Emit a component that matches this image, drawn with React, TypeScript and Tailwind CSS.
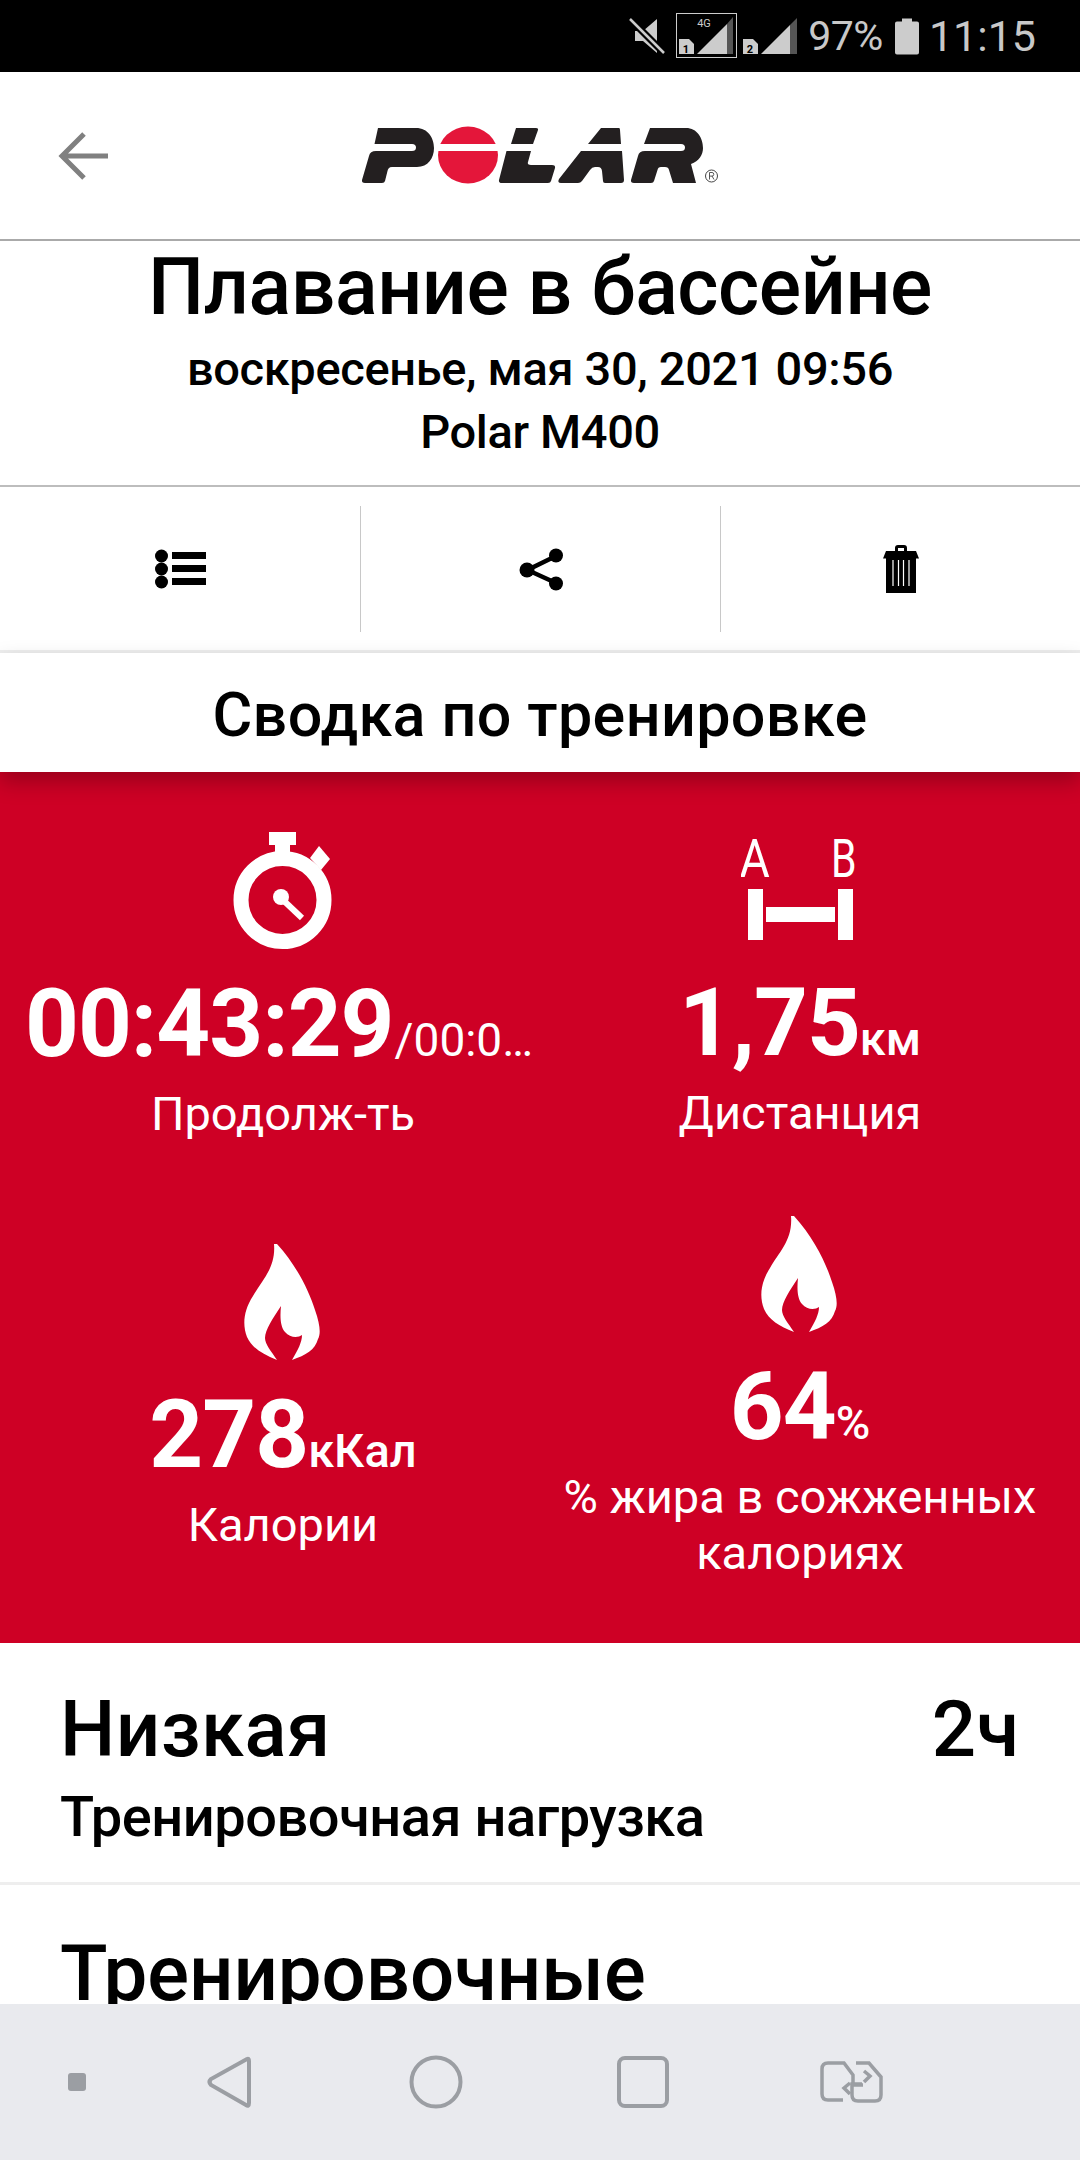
import React from "react";

function StatusIcons() {
  return (
    <svg width="170" height="72" viewBox="630 0 170 72" className="shrink-0">
      <g fill="#cccccc" stroke="none">
        <path d="M637 31h8l14-12v34l-14-12h-8z" />
        <path d="M632 19l34 34" stroke="#000" strokeWidth="7" fill="none" />
        <path d="M632 19l34 34" stroke="#cccccc" strokeWidth="2.500" fill="none" />
      </g>
      <rect x="678.500" y="13.500" width="60" height="44" fill="none" stroke="#cccccc" strokeWidth="1" />
      <text x="706" y="27" fontSize="11" fill="#cccccc" textAnchor="middle" fontFamily="Roboto, sans-serif">4G</text>
      <path d="M699 54l30-30v30z" fill="#cccccc" />
      <path d="M729 24l6-7v37h-6z" fill="#555" />
      <path d="M681 39h10l5 5v10h-15z" fill="#cccccc" />
      <text x="688" y="53" fontSize="11" fontWeight="700" fill="#000" textAnchor="middle" fontFamily="Roboto, sans-serif">1</text>
      <path d="M745 39h10l5 5v10h-15z" fill="#cccccc" />
      <text x="752" y="53" fontSize="11" fontWeight="700" fill="#000" textAnchor="middle" fontFamily="Roboto, sans-serif">2</text>
      <path d="M763 54l29-29v29z" fill="#cccccc" />
      <path d="M792 25l7-7v36h-7z" fill="#555" />
    </svg>
  );
}

function Logo() {
  return (
    <svg width="362" height="62" viewBox="360 125 362 62">
      <g fill="#231f20">
        <path d="M378,128 H416 C428,128 434,138 434,148 C434,158 428,167 417,167 H392 C389,167 388,169 387.5,171 L385,181 Q384.5,183 382,183 H365 Q361.5,183 362,180 L369,156 Q370,151 376,151 H412 Q416,151 416,147.5 Q416,144 412,144 H374.5 Z" />
        <path d="M516,128 H536 Q538.5,128 538,130 L533,144 H511 Z" />
        <path d="M506.5,151 H531 L528,162 Q527,165 531,165 H552 Q555.5,165 555,168 L551,181 Q550.5,183 548,183 H502 Q498.5,183 499,180 Z" />
        <path d="M601,128 H619 Q620,128 620,130 L621,144 H588 Z" />
        <path d="M581,151 H622 L624,180 Q624,183 621,183 H605 Q603,183 603,181 L602,171 Q601.5,167 598,167 H595 Q592,167 590,170 L582,181 Q580.5,183 578,183 H561 Q557,183 559,179 Z" />
        <path d="M650,128 H686 C697,128 703,138 703,148 C703,155 699,161 691,164 L696,183 H673 L669,170 Q668.5,167 665,167 H661 Q658,167 657.5,170 L654,181 Q653.5,183 651,183 H634 Q630.5,183 631,180 L638,156 Q639,151 645,151 H681 Q685,151 685,147.5 Q685,144 681,144 H644 Z" />
      </g>
      <ellipse cx="468" cy="155" rx="30" ry="28.5" fill="#e4163a" />
      <rect x="436" y="144" width="64" height="7" fill="#fff" />
      <circle cx="711.5" cy="176" r="6" fill="none" stroke="#444" strokeWidth="1" />
      <path d="M709.5 179.5v-7h2.500a1.800 1.800 0 0 1 0 3.600h-2.500M712 176l2 3.500" fill="none" stroke="#444" strokeWidth="0.9" />
    </svg>
  );
}

function ListIcon() {
  return (
    <svg width="52" height="40" viewBox="156 549 52 40" className="ml-[2px]">
      <circle cx="162.500" cy="556" r="6.500" />
      <circle cx="162.500" cy="569" r="6.500" />
      <circle cx="162.500" cy="582" r="6.500" />
      <rect x="173" y="552" width="34" height="7" />
      <rect x="173" y="565" width="34" height="7" />
      <rect x="173" y="578" width="34" height="7" />
    </svg>
  );
}

function ShareIcon() {
  return (
    <svg width="44" height="44" viewBox="518 546 44 44">
      <path d="M555 555L526.500 569L555 582" fill="none" stroke="#000" strokeWidth="4.500" />
      <circle cx="555" cy="554.500" r="7" />
      <circle cx="526" cy="569" r="7.500" />
      <circle cx="555" cy="582.500" r="7" />
    </svg>
  );
}

function TrashIcon() {
  return (
    <svg width="38" height="48" viewBox="881 543 38 48">
      <path d="M894 549v-3q0-3 3-3h6q3 0 3 3v3h9l3 7.500h-36l3-7.500zM897 549h6v-3h-6z" fillRule="evenodd" />
      <rect x="885" y="555" width="30" height="36" />
      <g stroke="#fff" strokeWidth="1.200">
        <path d="M892 558v26M897.500 558v26M902.500 558v26M908 558v26" />
      </g>
    </svg>
  );
}

function Stopwatch() {
  return (
    <svg width="104" height="117" viewBox="232 833 104 117">
      <g fill="#fff">
        <rect x="270" y="833" width="27" height="13" />
        <rect x="276" y="845" width="15" height="8" />
        <path d="M311 859l9-12 11 13-9 11z" />
      </g>
      <circle cx="283.500" cy="901" r="41.500" fill="none" stroke="#fff" strokeWidth="15" />
      <circle cx="282" cy="898" r="8" fill="#fff" />
      <path d="M284 901L303 919" stroke="#fff" strokeWidth="6" />
    </svg>
  );
}

function AB() {
  return (
    <svg width="118" height="104" viewBox="741 840 118 104">
      <text transform="translate(739.5 879) scale(0.86 1)" fontSize="54" fill="#fff" fontFamily="Roboto, sans-serif">A</text>
      <text transform="translate(831 879) scale(0.76 1)" fontSize="54" fill="#fff" fontFamily="Roboto, sans-serif">B</text>
      <rect x="748" y="891" width="15" height="51" fill="#fff" />
      <rect x="838" y="891" width="15" height="51" fill="#fff" />
      <rect x="766" y="909" width="69" height="15" fill="#fff" />
    </svg>
  );
}

function Flame() {
  return (
    <svg width="77" height="116" viewBox="0 0 77 116" className="mr-[2px]">
      <path
        fill="#fff"
        d="M30 0H33C53 22 65 47 71 66C76 80 77 90 74 95C71 106 62 111 48 116C54 106 58 98 58 91C54 94 46 94 41 88C36 82 36 72 37 62C29 74 21 86 21 94C21 100 27 107 33 116C18 110 8 104 3 93C-2 80 0 66 9 52C18 36 32 24 30 0Z"
      />
    </svg>
  );
}

function Metric({ icon, value, unit, label, extra, light }: { icon: React.ReactNode; value: string; unit: string; label: string; extra?: string; light?: boolean }) {
  return (
    <div className="flex flex-col items-center">
      <div className="h-[117px] flex items-center justify-center">{icon}</div>
      <div className="mt-[19px] h-[112px] flex items-baseline justify-center leading-[112px] whitespace-nowrap">
        <span className="text-[94px] font-bold text-white tracking-[-1px]">{value}</span>
        <span className={light ? "text-[46px] ml-[1px] mr-[8px] font-normal text-white" : "text-[47px] font-medium text-white"}>{unit}</span>
      </div>
      <div className="mt-[6px] text-[47px] leading-[56px] text-white text-center">{label}</div>
      {extra && <div className="text-[47px] leading-[56px] text-white text-center">{extra}</div>}
    </div>
  );
}

function NavIcons() {
  return (
    <svg width="1080" height="156" viewBox="0 2004 1080 156" fill="none" stroke="#9b9ea3" strokeWidth="4">
      <rect x="68" y="2073" width="18" height="18" rx="3" fill="#9b9ea3" stroke="none" />
      <path d="M247 2059q2-1 2 2v42q0 4-3 2l-35-20q-3-3 0-6z" />
      <circle cx="436" cy="2082" r="24.500" />
      <rect x="619" y="2058" width="48" height="48" rx="6" />
      <path d="M843 2100h-15q-6 0-6-6v-25q0-6 6-6h16l9 12v10h10M856 2063h13l12 14v18q0 6-6 6h-17q-6 0-6-6v-11h10" strokeWidth="3.500" />
      <path d="M864 2071l6 5-6 6M850 2083l-6 5 6 6" strokeWidth="3.500" />
    </svg>
  );
}

export default function App() {
  return (
    <div className="w-[1080px] h-[2160px] flex flex-col overflow-hidden bg-white text-black [font-family:Roboto,sans-serif]">
      <div className="h-[72px] bg-black flex items-center justify-end shrink-0 pr-[44px] text-[#c8c8c8]">
        <StatusIcons />
        <span className="text-[41px] leading-none ml-[10px] tracking-[-0.5px]">97%</span>
        <svg width="24" height="37" viewBox="0 0 24 36" className="ml-[12px]">
          <path d="M7 0h10v3h5q2 0 2 2v29q0 2-2 2h-20q-2 0-2-2v-29q0-2 2-2h5z" fill="#cccccc" />
        </svg>
        <span className="text-[43px] leading-none ml-[10px]">11:15</span>
      </div>

      <div className="flex-1 min-h-0 overflow-hidden flex flex-col">
        <div className="h-[169px] shrink-0 relative flex items-center justify-center border-b-[2px] border-[#aaaaaa]">
          <svg width="52" height="48" viewBox="58 132 52 48" className="absolute left-[58px] top-[60px]">
            <path d="M108 156H64M84 134L62 156L84 178" fill="none" stroke="#808080" strokeWidth="5" />
          </svg>
          <div className="ml-[2px]"><Logo /></div>
        </div>

        <div className="h-[246px] shrink-0 flex flex-col items-center border-b-[2px] border-[#bdbdbd]">
          <div className="text-[79px] font-medium tracking-[-0.45px] leading-[94px] mt-[-1px]">Плавание в бассейне</div>
          <div className="text-[47px] font-medium tracking-[-0.35px] leading-[60px] mt-[5px]">воскресенье, мая 30, 2021 09:56</div>
          <div className="text-[47px] font-medium tracking-[-0.35px] leading-[60px] mt-[3px]">Polar M400</div>
        </div>

        <div className="h-[166px] shrink-0 flex items-center border-b-[3px] border-[#eeeeee]">
          <div className="w-[361px] h-[126px] flex items-center justify-center border-r border-[#c8c8c8]"><ListIcon /></div>
          <div className="w-[360px] h-[126px] flex items-center justify-center border-r border-[#c8c8c8]"><ShareIcon /></div>
          <div className="flex-1 h-[126px] flex items-center justify-center"><TrashIcon /></div>
        </div>

        <div className="h-[119px] shrink-0 relative z-10 bg-white flex items-center justify-center text-[61px] font-medium tracking-[0.4px] shadow-[0_10px_20px_rgba(0,0,0,0.25)] pt-[7px]">
          Сводка по тренировке
        </div>

        <div className="h-[871px] shrink-0 bg-[#ce0025] pl-[6px] pt-[60px] grid grid-cols-[554px_480px] grid-rows-[309px_auto] gap-y-[74px] content-start">
          <Metric icon={<Stopwatch />} value="00:43:29" unit="/00:0…" label="Продолж-ть" light />
          <Metric icon={<AB />} value="1,75" unit="км" label="Дистанция" />
          <div className="self-center">
            <Metric icon={<Flame />} value="278" unit="кКал" label="Калории" />
          </div>
          <Metric icon={<Flame />} value="64" unit="%" label="% жира в сожженных" extra="калориях" />
        </div>

        <div className="h-[242px] shrink-0 pl-[60px] pr-[61px] border-b-[3px] border-[#eeeeee]">
          <div className="flex justify-between items-center h-[86px] mt-[44px]">
            <span className="text-[78px] font-medium tracking-[0.4px] leading-none">Низкая</span>
            <span className="text-[78px] font-medium leading-none">2ч</span>
          </div>
          <div className="text-[56px] font-medium tracking-[-0.5px] leading-[60px] mt-[14px]">Тренировочная нагрузка</div>
        </div>

        <div className="pl-[60px] pt-[44px] text-[78px] font-medium tracking-[-0.1px] leading-[90px]">Тренировочные</div>
      </div>

      <div className="h-[156px] shrink-0 bg-[#e9eaee]">
        <NavIcons />
      </div>
    </div>
  );
}
